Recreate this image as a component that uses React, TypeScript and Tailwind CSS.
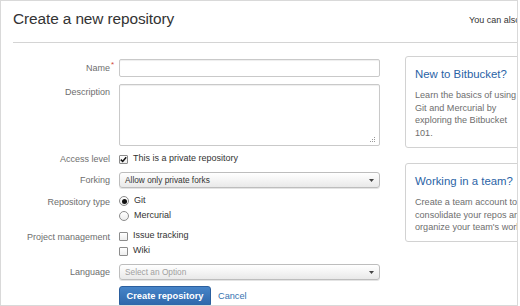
import type { ReactNode } from "react";

const font = { fontFamily: '"Liberation Sans", Arial, sans-serif' };

function Checkbox({ checked }: { checked?: boolean }) {
  return (
    <span className="flex h-[9px] w-[9px] shrink-0 items-center justify-center rounded-[1px] border border-[#8c8c8c] bg-gradient-to-b from-white to-[#ededed]">
      {checked && (
        <svg width="7" height="7" viewBox="0 0 7 7">
          <path d="M0.8 3.6 L2.7 5.5 L6.2 1.2" fill="none" stroke="#111" strokeWidth="1.5" />
        </svg>
      )}
    </span>
  );
}

function Radio({ checked }: { checked?: boolean }) {
  return (
    <span className="flex h-[10px] w-[10px] shrink-0 items-center justify-center rounded-full border border-[#8c8c8c] bg-gradient-to-b from-white to-[#ededed]">
      {checked && <span className="h-[5px] w-[5px] rounded-full bg-[#111]" />}
    </span>
  );
}

function Row({
  label,
  children,
  className = "",
  top = false,
  required = false,
}: {
  label: string;
  children: ReactNode;
  className?: string;
  top?: boolean;
  required?: boolean;
}) {
  return (
    <div className={`flex ${top ? "items-start" : "items-center"} ${className}`}>
      <div
        className={`relative w-[97px] shrink-0 text-right text-[9px] leading-[12px] text-[#6e6e6e] ${
          top ? "pt-[2px]" : ""
        }`}
      >
        {label}
        {required && (
          <span className="absolute -right-[4px] -top-[3px] text-[8px] text-[#d04437]">*</span>
        )}
      </div>
      <div className="ml-[9px] w-[261px]">{children}</div>
    </div>
  );
}

function Option({ children }: { children: ReactNode }) {
  return (
    <div className="flex h-[14px] items-center gap-[5px] text-[9px] text-[#333]">{children}</div>
  );
}

function Select({ value, placeholder }: { value: string; placeholder?: boolean }) {
  return (
    <div className="flex h-[16px] w-full items-center justify-between rounded-[3px] border border-[#bdbdbd] bg-gradient-to-b from-white to-[#e9e9e9] pl-[5px] pr-[5px] shadow-[0_1px_0_#e4e4e4]">
      <span className={`text-[8.3px] ${placeholder ? "text-[#a0a0a0]" : "text-[#333]"}`}>
        {value}
      </span>
      <svg width="5" height="3" viewBox="0 0 5 3">
        <path d="M0 0 H5 L2.5 3 Z" fill="#444" />
      </svg>
    </div>
  );
}

function Card({ title, lines, className = "" }: { title: string; lines: string[]; className?: string }) {
  return (
    <div className={`rounded-[3px] border border-[#d2d2d2] px-[9px] pb-[7px] pt-[10px] ${className}`}>
      <h2 className="text-[11.4px] leading-[14px] text-[#2a63a6]">{title}</h2>
      <p className="mt-[8px] whitespace-nowrap text-[9.1px] leading-[12.7px] text-[#6e6e6e]">
        {lines.map((l, i) => (
          <span key={i} className="block">
            {l}
          </span>
        ))}
      </p>
    </div>
  );
}

export default function App() {
  return (
    <div className="h-[306px] w-[520px] bg-white" style={font}>
      <div className="h-[306px] w-[518px] overflow-hidden border border-[#d9d9d9]">
        <div className="w-[640px] pl-[12px]">
          <header className="flex h-[42px] items-start border-b border-[#d4d4d4] pt-[9px]">
            <h1 className="w-[456px] shrink-0 text-[15.4px] leading-[18px] tracking-[-0.1px] text-[#333]">
              Create a new repository
            </h1>
            <span className="whitespace-nowrap pt-[4px] text-[9px] leading-[12px] text-[#333]">
              You can also import a repository.
            </span>
          </header>

          <div className="flex">
            <form className="w-[367px] shrink-0 pt-[16px]">
              <Row label="Name" required>
                <input
                  type="text"
                  className="block h-[18px] w-full rounded-[2px] border border-[#c9c9c9] bg-white shadow-[inset_0_1px_1px_#eee]"
                />
              </Row>

              <Row label="Description" top className="mt-[7px]">
                <div className="relative h-[62px] w-full rounded-[2px] border border-[#c9c9c9] bg-white shadow-[inset_0_1px_1px_#eee]">
                  <svg
                    className="absolute bottom-[2px] right-[3px]"
                    width="6"
                    height="6"
                    viewBox="0 0 6 6"
                  >
                    <rect x="4" y="0" width="1" height="1" fill="#9a9a9a" />
                    <rect x="2" y="2" width="1" height="1" fill="#9a9a9a" />
                    <rect x="4" y="2" width="1" height="1" fill="#9a9a9a" />
                    <rect x="0" y="4" width="1" height="1" fill="#9a9a9a" />
                    <rect x="2" y="4" width="1" height="1" fill="#9a9a9a" />
                    <rect x="4" y="4" width="1" height="1" fill="#9a9a9a" />
                  </svg>
                </div>
              </Row>

              <Row label="Access level" className="mt-[6px] h-[14px]">
                <Option>
                  <Checkbox checked />
                  This is a private repository
                </Option>
              </Row>

              <Row label="Forking" className="mt-[6px]">
                <Select value="Allow only private forks" />
              </Row>

              <Row label="Repository type" top className="mt-[6px]">
                <div className="flex flex-col gap-[1px]">
                  <Option>
                    <Radio checked />
                    Git
                  </Option>
                  <Option>
                    <Radio />
                    Mercurial
                  </Option>
                </div>
              </Row>

              <Row label="Project management" top className="mt-[6px]">
                <div className="flex flex-col gap-[1px]">
                  <Option>
                    <Checkbox />
                    Issue tracking
                  </Option>
                  <Option>
                    <Checkbox />
                    Wiki
                  </Option>
                </div>
              </Row>

              <Row label="Language" className="mt-[6px]">
                <Select value="Select an Option" placeholder />
              </Row>

              <div className="mt-[6px] flex items-center pl-[106px]">
                <button
                  type="button"
                  className="h-[21px] w-[92px] rounded-[3px] border border-[#2b5f9e] bg-gradient-to-b from-[#4684c8] to-[#2d66a9] text-[9.3px] font-bold text-white"
                >
                  Create repository
                </button>
                <a className="ml-[7px] text-[9.2px] text-[#3572b0]">Cancel</a>
              </div>
            </form>

            <aside className="ml-[25px] w-[132px] shrink-0 pt-[13px]">
              <Card
                title="New to Bitbucket?"
                lines={["Learn the basics of using", "Git and Mercurial by", "exploring the Bitbucket", "101."]}
              />
              <Card
                className="mt-[15px]"
                title="Working in a team?"
                lines={["Create a team account to", "consolidate your repos and", "organize your team's work."]}
              />
            </aside>
          </div>
        </div>
      </div>
    </div>
  );
}
